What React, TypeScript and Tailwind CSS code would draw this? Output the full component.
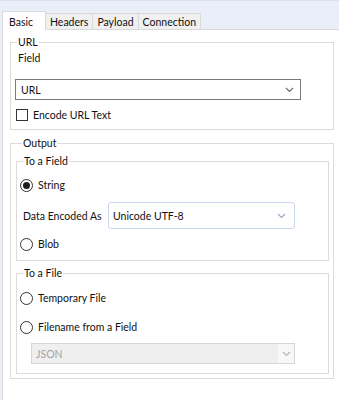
import type { ReactNode } from "react";

const font = { fontFamily: 'Lato, "Noto Sans", sans-serif' };

function Chevron({ color = "#6b6b6b" }: { color?: string }) {
  return (
    <svg width="9" height="6" viewBox="0 0 9 6" fill="none">
      <polyline points="1,1 4.5,4.5 8,1" stroke={color} strokeWidth="1.1" />
    </svg>
  );
}

function Radio({ checked, label }: { checked?: boolean; label: string }) {
  return (
    <div className="flex h-[14px] items-center gap-[5px] pl-[3px]">
      <span className="flex h-[13px] w-[13px] items-center justify-center rounded-full border border-[#333333] bg-white">
        {checked && <span className="h-[7px] w-[7px] rounded-full bg-[#1f1f1f]" />}
      </span>
      <span>{label}</span>
    </div>
  );
}

function Group({ title, className, children }: { title: string; className?: string; children: ReactNode }) {
  return (
    <fieldset className={"border border-[#dcdcdc] " + (className ?? "")}>
      <legend className="ml-[6px] px-[1px] leading-[14px]">{title}</legend>
      {children}
    </fieldset>
  );
}

const tabs = ["Headers", "Payload", "Connection"];

export default function App() {
  return (
    <div className="flex h-[400px] w-[339px] flex-col whitespace-nowrap bg-[#e9eef8] text-[10.5px] leading-[14px] text-[#111111]" style={font}>
      <div className="flex h-[29px] items-end border-t border-[#dde2ea] pl-[2px]">
        <div className="relative z-10 -mb-px flex h-[19px] w-[44px] items-start border border-b-0 border-[#d9d9d9] bg-white pl-[6px] pt-[3px]">
          Basic
        </div>
        {tabs.map((t) => (
          <div key={t} className="-ml-px flex h-[16px] items-center border border-b-0 border-[#d9d9d9] bg-[#f0f0f0] px-[4px]">
            {t}
          </div>
        ))}
      </div>

      <div className="ml-[2px] flex-1 border-l border-t border-[#d9d9d9] bg-white pl-[7px] pr-[5px] pt-[5px]">
        <Group title="URL" className="h-[95px]">
          <div className="mt-[2px] pl-[7px]">Field</div>
          <div className="ml-[4px] mt-[14px] flex h-[21px] w-[286px] items-center justify-between border border-[#7a7a7a] pl-[5px] pr-[6px]">
            <span>URL</span>
            <Chevron />
          </div>
          <div className="mt-[8px] flex h-[14px] items-center gap-[5px] pl-[5px]">
            <span className="h-[12px] w-[12px] border border-[#333333] bg-white" />
            <span>Encode URL Text</span>
          </div>
        </Group>

        <Group title="Output" className="mt-[6px] h-[243px] pl-[5px] pr-[4px]">
          <Group title="To a Field" className="mt-[4px] h-[107px]">
            <div className="mt-[10px]">
              <Radio checked label="String" />
            </div>
            <div className="mt-[10px] flex items-center">
              <span className="w-[91px] pl-[6px]">Data Encoded As</span>
              <div className="flex h-[27px] w-[187px] items-center justify-between rounded-[3px] border border-[#cbd5ec] pl-[4px] pr-[8px]">
                <span>Unicode UTF-8</span>
                <Chevron color="#9aa6c4" />
              </div>
            </div>
            <div className="mt-[8px]">
              <Radio label="Blob" />
            </div>
          </Group>

          <Group title="To a File" className="mt-[5px] h-[108px]">
            <div className="mt-[11px]">
              <Radio label="Temporary File" />
            </div>
            <div className="mt-[15px]">
              <Radio label="Filename from a Field" />
            </div>
            <div className="ml-[14px] mt-[9px] flex h-[21px] w-[264px] items-stretch border border-[#d6d6d6] bg-[#efefef]">
              <span className="flex flex-1 items-center pl-[4px] text-[#a3a3a3]">JSON</span>
              <span className="flex w-[16px] items-center justify-center bg-[#f7f7f7]">
                <Chevron color="#b5b5b5" />
              </span>
            </div>
          </Group>
        </Group>
      </div>
    </div>
  );
}
